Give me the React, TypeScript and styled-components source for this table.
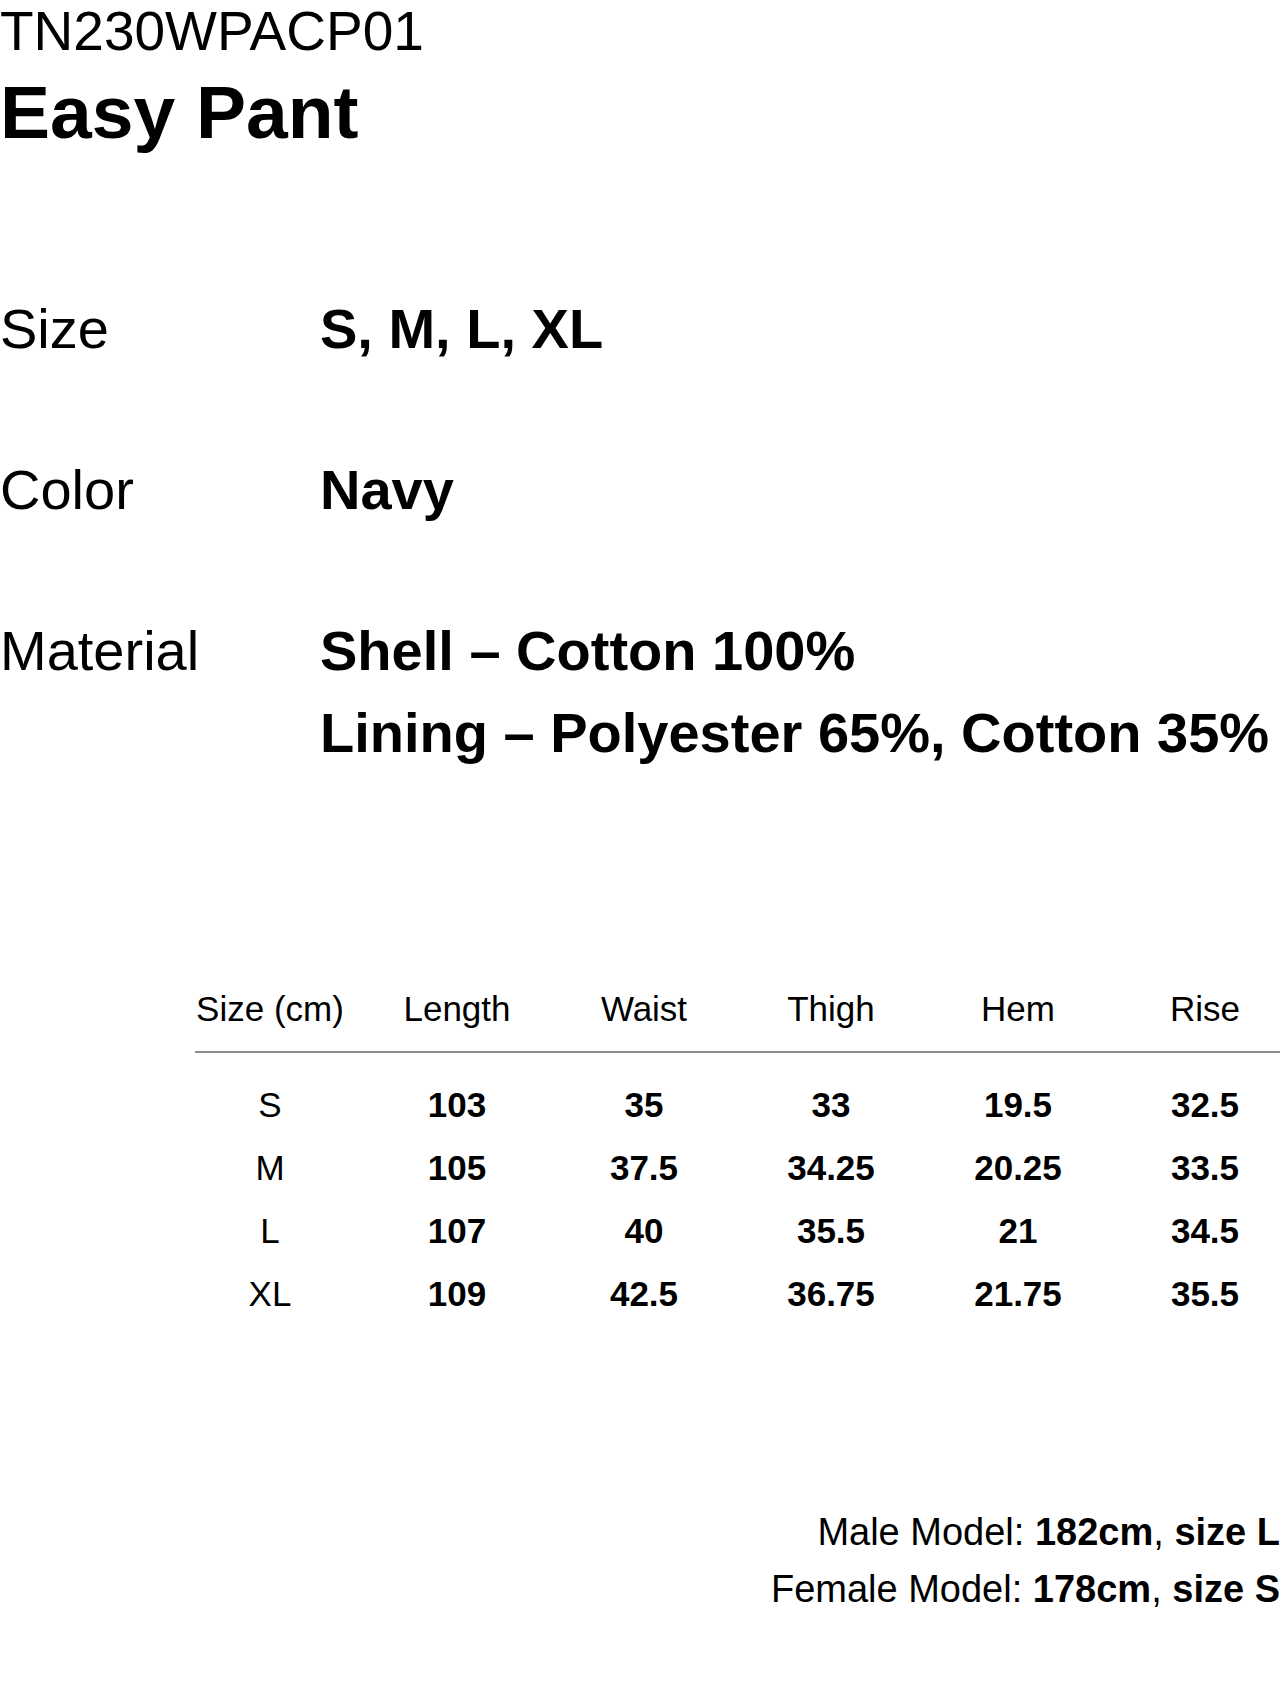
import React from 'react';
import styled, { createGlobalStyle } from 'styled-components';

const GlobalStyle = createGlobalStyle`
  html, body {
    margin: 0;
    padding: 0;
    background: #ffffff;
  }
  body {
    font-family: "Liberation Sans", Arial, Helvetica, sans-serif;
    color: #000000;
    overflow-x: hidden;
  }
`;

const specs = [
  { label: 'Size', values: ['S, M, L, XL'] },
  { label: 'Color', values: ['Navy'] },
  { label: 'Material', values: ['Shell – Cotton 100%', 'Lining – Polyester 65%, Cotton 35%'] },
];

const columns = ['Size (cm)', 'Length', 'Waist', 'Thigh', 'Hem', 'Rise'];

const rows = [
  ['S', '103', '35', '33', '19.5', '32.5'],
  ['M', '105', '37.5', '34.25', '20.25', '33.5'],
  ['L', '107', '40', '35.5', '21', '34.5'],
  ['XL', '109', '42.5', '36.75', '21.75', '35.5'],
];

const models = [
  { who: 'Male Model', height: '182cm', size: 'size L' },
  { who: 'Female Model', height: '178cm', size: 'size S' },
];

export default function App() {
  return (
    <Page>
      <GlobalStyle />
      <Header>
        <Code>TN230WPACP01</Code>
        <Name>Easy Pant</Name>
      </Header>

      <Specs>
        {specs.map((s) => (
          <SpecRow key={s.label}>
            <SpecLabel>{s.label}</SpecLabel>
            <SpecValues>
              {s.values.map((v) => (
                <SpecValue key={v}>{v}</SpecValue>
              ))}
            </SpecValues>
          </SpecRow>
        ))}
      </Specs>

      <SizeTable>
        <HeadRow>
          {columns.map((c) => (
            <HeadCell key={c}>{c}</HeadCell>
          ))}
        </HeadRow>
        <Body>
          {rows.map((r) => (
            <DataRow key={r[0]}>
              {r.map((cell, i) => (
                <Cell key={i} $strong={i > 0}>
                  {cell}
                </Cell>
              ))}
            </DataRow>
          ))}
        </Body>
      </SizeTable>

      <Models>
        {models.map((m) => (
          <ModelLine key={m.who}>
            {m.who}: <b>{m.height}</b>, <b>{m.size}</b>
          </ModelLine>
        ))}
      </Models>
    </Page>
  );
}

const Page = styled.div`
  width: 1280px;
  min-height: 1704px;
  display: flex;
  flex-direction: column;
`;

const Header = styled.div`
  display: flex;
  flex-direction: column;
`;

const Code = styled.div`
  font-size: 55px;
  line-height: 62px;
  font-weight: 400;
`;

const Name = styled.h1`
  margin: 0;
  font-size: 75px;
  line-height: 100px;
  font-weight: 700;
`;

const Specs = styled.div`
  display: flex;
  flex-direction: column;
  gap: 79px;
  padding-top: 126px;
`;

const SpecRow = styled.div`
  display: grid;
  grid-template-columns: 320px 1fr;
  font-size: 56px;
  line-height: 82px;
`;

const SpecLabel = styled.div`
  font-weight: 400;
`;

const SpecValues = styled.div`
  display: flex;
  flex-direction: column;
`;

const SpecValue = styled.div`
  font-weight: 700;
  white-space: nowrap;
`;

const SizeTable = styled.div`
  margin: 210px 0 0 195px;
  width: 1085px;
  font-size: 35px;
`;

const HeadRow = styled.div`
  display: grid;
  grid-template-columns: repeat(6, 150px);
  column-gap: 37px;
  line-height: 50px;
  padding-bottom: 17px;
  border-bottom: 2px solid #8e8e8e;
`;

const HeadCell = styled.div`
  text-align: center;
  white-space: nowrap;
`;

const Body = styled.div`
  padding-top: 20px;
`;

const DataRow = styled.div`
  display: grid;
  grid-template-columns: repeat(6, 150px);
  column-gap: 37px;
  line-height: 63px;
`;

const Cell = styled.div<{ $strong?: boolean }>`
  text-align: center;
  font-weight: ${(p) => (p.$strong ? 700 : 400)};
`;

const Models = styled.div`
  margin-top: 179px;
  display: flex;
  flex-direction: column;
  align-items: flex-end;
  font-size: 38px;
  line-height: 57px;
`;

const ModelLine = styled.div`
  white-space: nowrap;

  b {
    font-weight: 700;
  }
`;
